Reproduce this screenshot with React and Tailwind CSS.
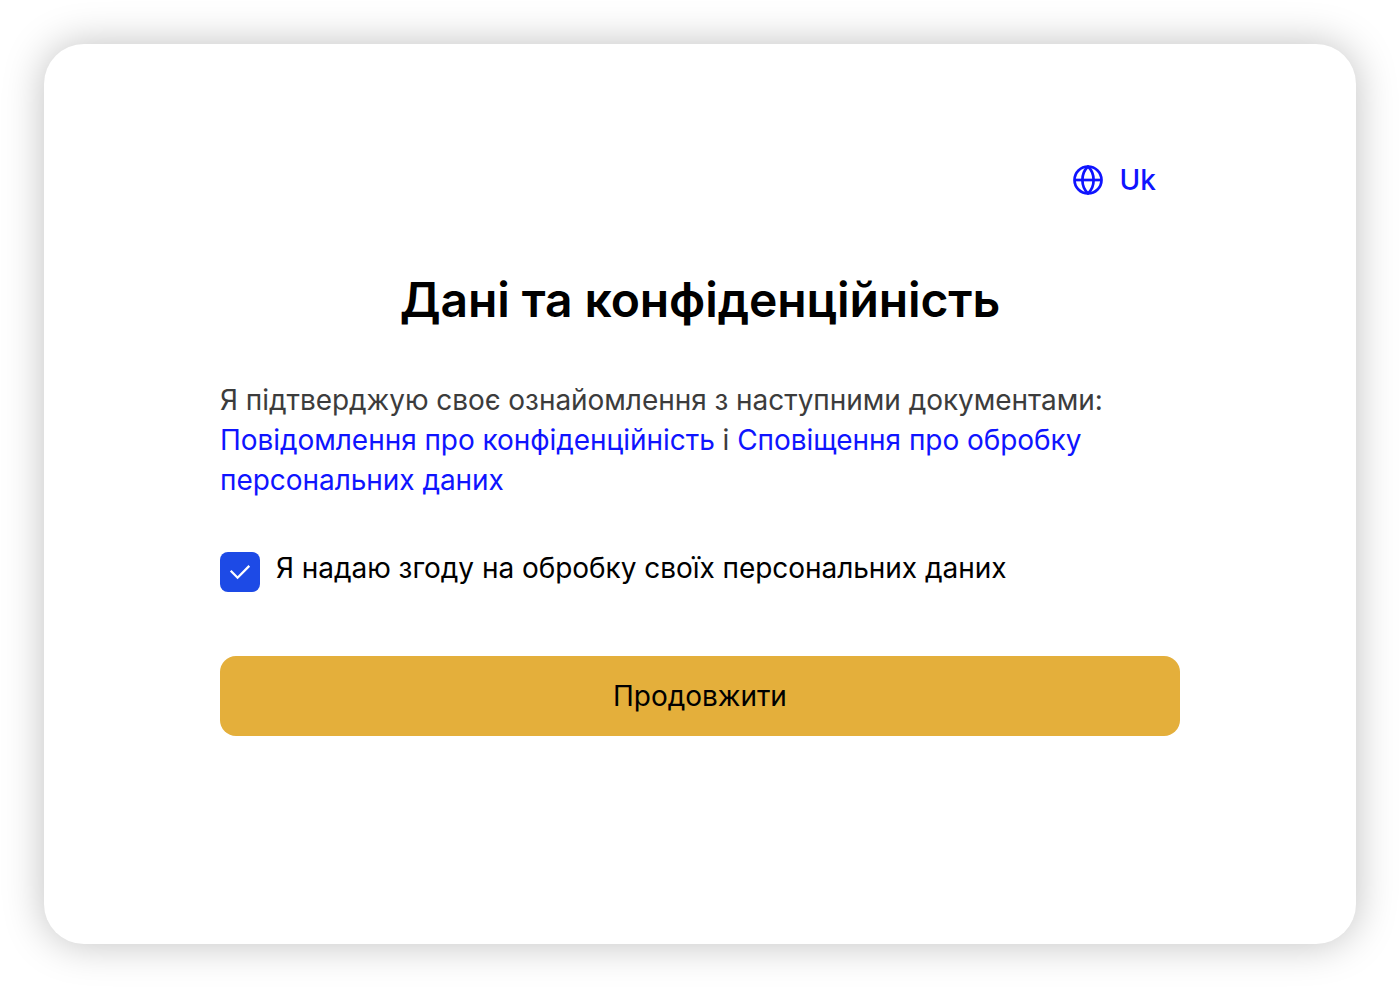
import React, { useState } from 'react'

const GlobeIcon = () => (
  <svg className="size-8" viewBox="0 0 32 32" fill="none" stroke="currentColor" strokeWidth="2.7" strokeLinejoin="round">
    <circle cx="16" cy="16" r="13.5" />
    <path d="M2.5 16h27" />
    <path d="M16 2.5c-3.6 3.4-5.6 8.3-5.6 13.5s2 10.1 5.6 13.5c3.6-3.4 5.6-8.3 5.6-13.5s-2-10.1-5.6-13.5z" />
  </svg>
)

const CheckIcon = () => (
  <svg className="size-10" viewBox="0 0 40 40" fill="none" stroke="currentColor" strokeWidth="2.3">
    <path d="M10.7 18.7l6.9 7L29.3 13.9" />
  </svg>
)

const App = () => {
  const [agreed, setAgreed] = useState(true)

  return (
    <div className="flex h-[988px] w-[1400px] p-11 bg-white font-['Inter',sans-serif]">
      <div className="w-full rounded-[40px] bg-white px-44 pt-[116px] shadow-[0_0_40px_rgba(0,0,0,0.25)]">
        <div className="flex justify-end pr-6">
          <button className="flex items-center gap-4 text-[28px] leading-10 font-medium text-[#0f14ff]">
            <GlobeIcon />
            Uk
          </button>
        </div>

        <h1 className="mt-[68px] text-center text-[48px] leading-[64px] font-semibold tracking-[-0.1px] text-black">
          Дані та конфіденційність
        </h1>

        <p className="mt-12 text-[28px] leading-10 tracking-[-0.048px] text-[#3c3c3c]">
          Я підтверджую своє ознайомлення з наступними документами:{' '}
          <a href="#" className="text-[#0f14ff]">Повідомлення про конфіденційність</a>
          {' '}і{' '}
          <a href="#" className="text-[#0f14ff]">Сповіщення про обробку персональних даних</a>
        </p>

        <div className="mt-12 flex items-start gap-4">
          <button
            role="checkbox"
            aria-checked={agreed}
            onClick={() => setAgreed(!agreed)}
            className="mt-1 size-10 rounded-lg bg-[#1d4ae6] text-white"
          >
            {agreed && <CheckIcon />}
          </button>
          <span className="text-[28px] leading-10 tracking-[-0.045px] text-black">
            Я надаю згоду на обробку своїх персональних даних
          </span>
        </div>

        <button className="mt-16 h-20 w-full rounded-2xl bg-[#e4af3b] text-[28px] leading-10 tracking-[-0.045px] text-black">
          Продовжити
        </button>
      </div>
    </div>
  )
}

export default App
